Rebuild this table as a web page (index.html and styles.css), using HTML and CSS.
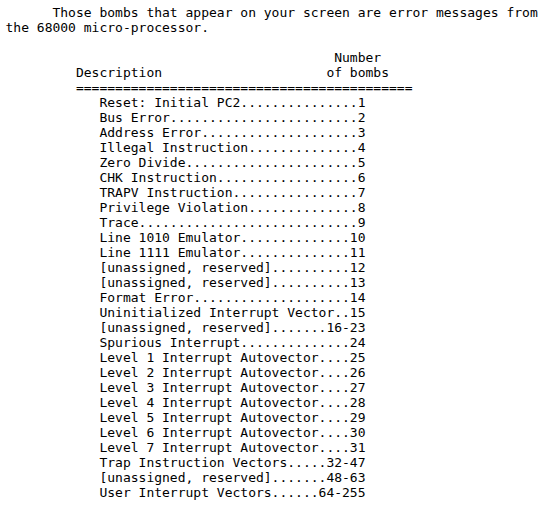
FILE: index.html
```html
<!DOCTYPE html>
<html lang="en">
<head>
<meta charset="utf-8">
<title>68000 bomb error messages</title>
<link rel="stylesheet" href="styles.css">
</head>
<body class="page">
<pre class="doc">      Those bombs that appear on your screen are error messages from
the 68000 micro-processor.

                                          Number
         Description                     of bombs
         ===========================================
            Reset: Initial PC2...............1
            Bus Error........................2
            Address Error....................3
            Illegal Instruction..............4
            Zero Divide......................5
            CHK Instruction..................6
            TRAPV Instruction................7
            Privilege Violation..............8
            Trace............................9
            Line 1010 Emulator..............10
            Line 1111 Emulator..............11
            [unassigned, reserved]..........12
            [unassigned, reserved]..........13
            Format Error....................14
            Uninitialized Interrupt Vector..15
            [unassigned, reserved].......16-23
            Spurious Interrupt..............24
            Level 1 Interrupt Autovector....25
            Level 2 Interrupt Autovector....26
            Level 3 Interrupt Autovector....27
            Level 4 Interrupt Autovector....28
            Level 5 Interrupt Autovector....29
            Level 6 Interrupt Autovector....30
            Level 7 Interrupt Autovector....31
            Trap Instruction Vectors.....32-47
            [unassigned, reserved].......48-63
            User Interrupt Vectors......64-255</pre>
</body>
</html>
```

FILE: styles.css
```css
html, body {
  margin: 0;
  padding: 0;
  background: #ffffff;
}

.page {
  padding: 5px 0 0 5.5px;
}

.doc {
  margin: 0;
  font-family: "DejaVu Sans Mono", "Liberation Mono", monospace;
  font-size: 13px;
  line-height: 15px;
  color: #000000;
  white-space: pre;
}
```
